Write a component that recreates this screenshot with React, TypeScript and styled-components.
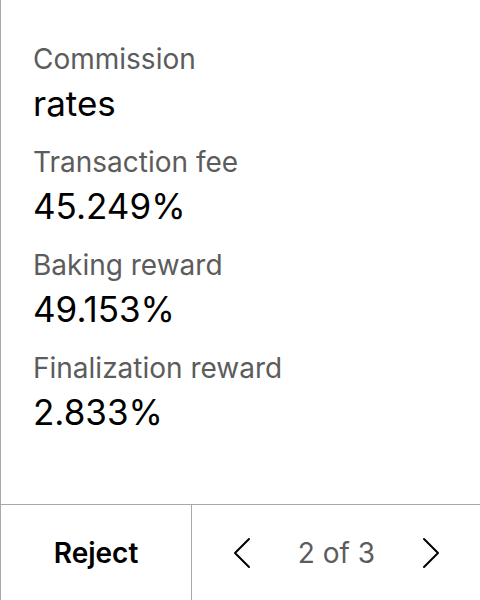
import React from "react";
import styled, { createGlobalStyle } from "styled-components";

const GlobalStyle = createGlobalStyle`
    html, body {
        margin: 0;
        padding: 0;
        background: #ffffff;
    }
    body {
        font-family: Inter, "Noto Sans", sans-serif;
    }
`;

const rates = [
    { label: "Transaction fee", value: "45.249%" },
    { label: "Baking reward", value: "49.153%" },
    { label: "Finalization reward", value: "2.833%" },
];

export default function App() {
    return (
        <Screen>
            <GlobalStyle />
            <Content>
                <Field>
                    <Label>Commission</Label>
                    <Value>rates</Value>
                </Field>
                {rates.map((r) => (
                    <Field key={r.label}>
                        <Label>{r.label}</Label>
                        <Value>{r.value}</Value>
                    </Field>
                ))}
            </Content>
            <Footer>
                <RejectButton>Reject</RejectButton>
                <Pager>
                    <Arrow aria-label="previous">
                        <svg width="18" height="32" viewBox="0 0 18 32" fill="none" stroke="#000" strokeWidth="2" strokeLinecap="round" strokeLinejoin="round">
                            <path d="M16 2 2 16l14 14" />
                        </svg>
                    </Arrow>
                    <PageText>2 of 3</PageText>
                    <Arrow aria-label="next">
                        <svg width="18" height="32" viewBox="0 0 18 32" fill="none" stroke="#000" strokeWidth="2" strokeLinecap="round" strokeLinejoin="round">
                            <path d="M2 2l14 14L2 30" />
                        </svg>
                    </Arrow>
                </Pager>
            </Footer>
        </Screen>
    );
}

const Screen = styled.div`
    width: 480px;
    height: 600px;
    box-sizing: border-box;
    border-left: 1px solid #a8a8a8;
    display: flex;
    flex-direction: column;
`;

const Content = styled.div`
    flex: 1;
    padding: 38px 32px 0;
    display: flex;
    flex-direction: column;
    gap: 15px;
`;

const Field = styled.div`
    display: flex;
    flex-direction: column;
`;

const Label = styled.div`
    font-size: 28px;
    line-height: 42px;
    color: #5c5c5c;
`;

const Value = styled.div`
    font-size: 35px;
    line-height: 46px;
    color: #000;
`;

const Footer = styled.div`
    height: 96px;
    box-sizing: border-box;
    border-top: 1px solid #a8a8a8;
    display: grid;
    grid-template-columns: 191px 1fr;
`;

const RejectButton = styled.button`
    border: none;
    border-right: 1px solid #a8a8a8;
    background: none;
    font-family: Inter, "Noto Sans", sans-serif;
    font-size: 28px;
    font-weight: 600;
    color: #000;
    padding: 0;
`;

const Pager = styled.div`
    display: flex;
    align-items: center;
    justify-content: space-between;
    padding: 0 40px 0 41px;
`;

const Arrow = styled.button`
    border: none;
    background: none;
    padding: 0;
    width: 18px;
    height: 32px;
    display: flex;
    align-items: center;
    justify-content: center;
`;

const PageText = styled.span`
    font-size: 28px;
    color: #5c5c5c;
`;
